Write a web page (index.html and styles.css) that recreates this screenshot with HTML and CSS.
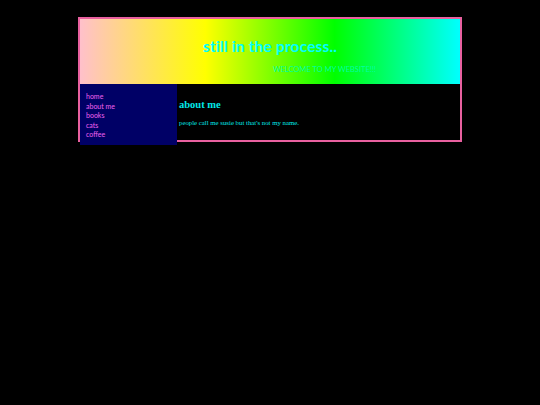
FILE: index.html
```html
<!DOCTYPE html>
<html lang="en">
<head>
<meta charset="utf-8">
<title>still in the process..</title>
<link rel="stylesheet" href="styles.css">
</head>
<body>
<div class="page">
  <header class="banner">
    <h1 class="title">still in the process..</h1>
    <p class="welcome">WELCOME TO MY WEBSITE!!!</p>
  </header>
  <div class="body-row">
    <nav class="sidebar">
      <a href="#">home</a>
      <a href="#">about me</a>
      <a href="#">books</a>
      <a href="#">cats</a>
      <a href="#">coffee</a>
    </nav>
    <main class="content">
      <h2>about me</h2>
      <p>people call me susie but that's not my name.</p>
    </main>
  </div>
</div>
</body>
</html>
```
FILE: styles.css
```css
html, body { margin: 0; padding: 0; background: #000; }
body { height: 405px; overflow: hidden; }
.page {
  box-sizing: border-box;
  width: 384px;
  height: 125px;
  margin: 17px 0 0 78px;
  border: 2px solid #e9609f;
}
.banner {
  box-sizing: border-box;
  height: 65px;
  background: linear-gradient(to right, #ffc0cb 0%, #ffff00 33%, #00ff00 67%, #00ffff 100%);
  color: #00ffff;
  font-family: "Lato", sans-serif;
  overflow: hidden;
}
.title {
  margin: 0;
  padding: 18px 0 0 123px;
  font-size: 15.5px;
  line-height: 18px;
  font-weight: bold;
  letter-spacing: 0.15px;
  white-space: nowrap;
}
.welcome {
  margin: 0;
  padding: 10px 0 0 193px;
  font-size: 7.5px;
  line-height: 9px;
  color: #00ffa0;
  white-space: nowrap;
}
.body-row { display: flex; height: 56px; align-items: flex-start; }
.sidebar {
  box-sizing: border-box;
  width: 97px;
  height: 61px;
  flex: none;
  padding: 8px 0 0 6px;
  background: #000066;
  display: flex;
  flex-direction: column;
}
.sidebar a {
  color: #f060f0;
  font-family: "Lato", sans-serif;
  font-size: 7px;
  line-height: 9.6px;
  text-decoration: none;
}
.content {
  padding-left: 2px;
  color: #00e8e8;
  font-family: "Liberation Serif", serif;
}
.content h2 {
  margin: 14px 0 0;
  font-size: 10.5px;
  line-height: 13px;
  font-weight: bold;
}
.content p {
  margin: 7px 0 0;
  font-size: 6.8px;
  line-height: 9px;
  white-space: nowrap;
}
```
